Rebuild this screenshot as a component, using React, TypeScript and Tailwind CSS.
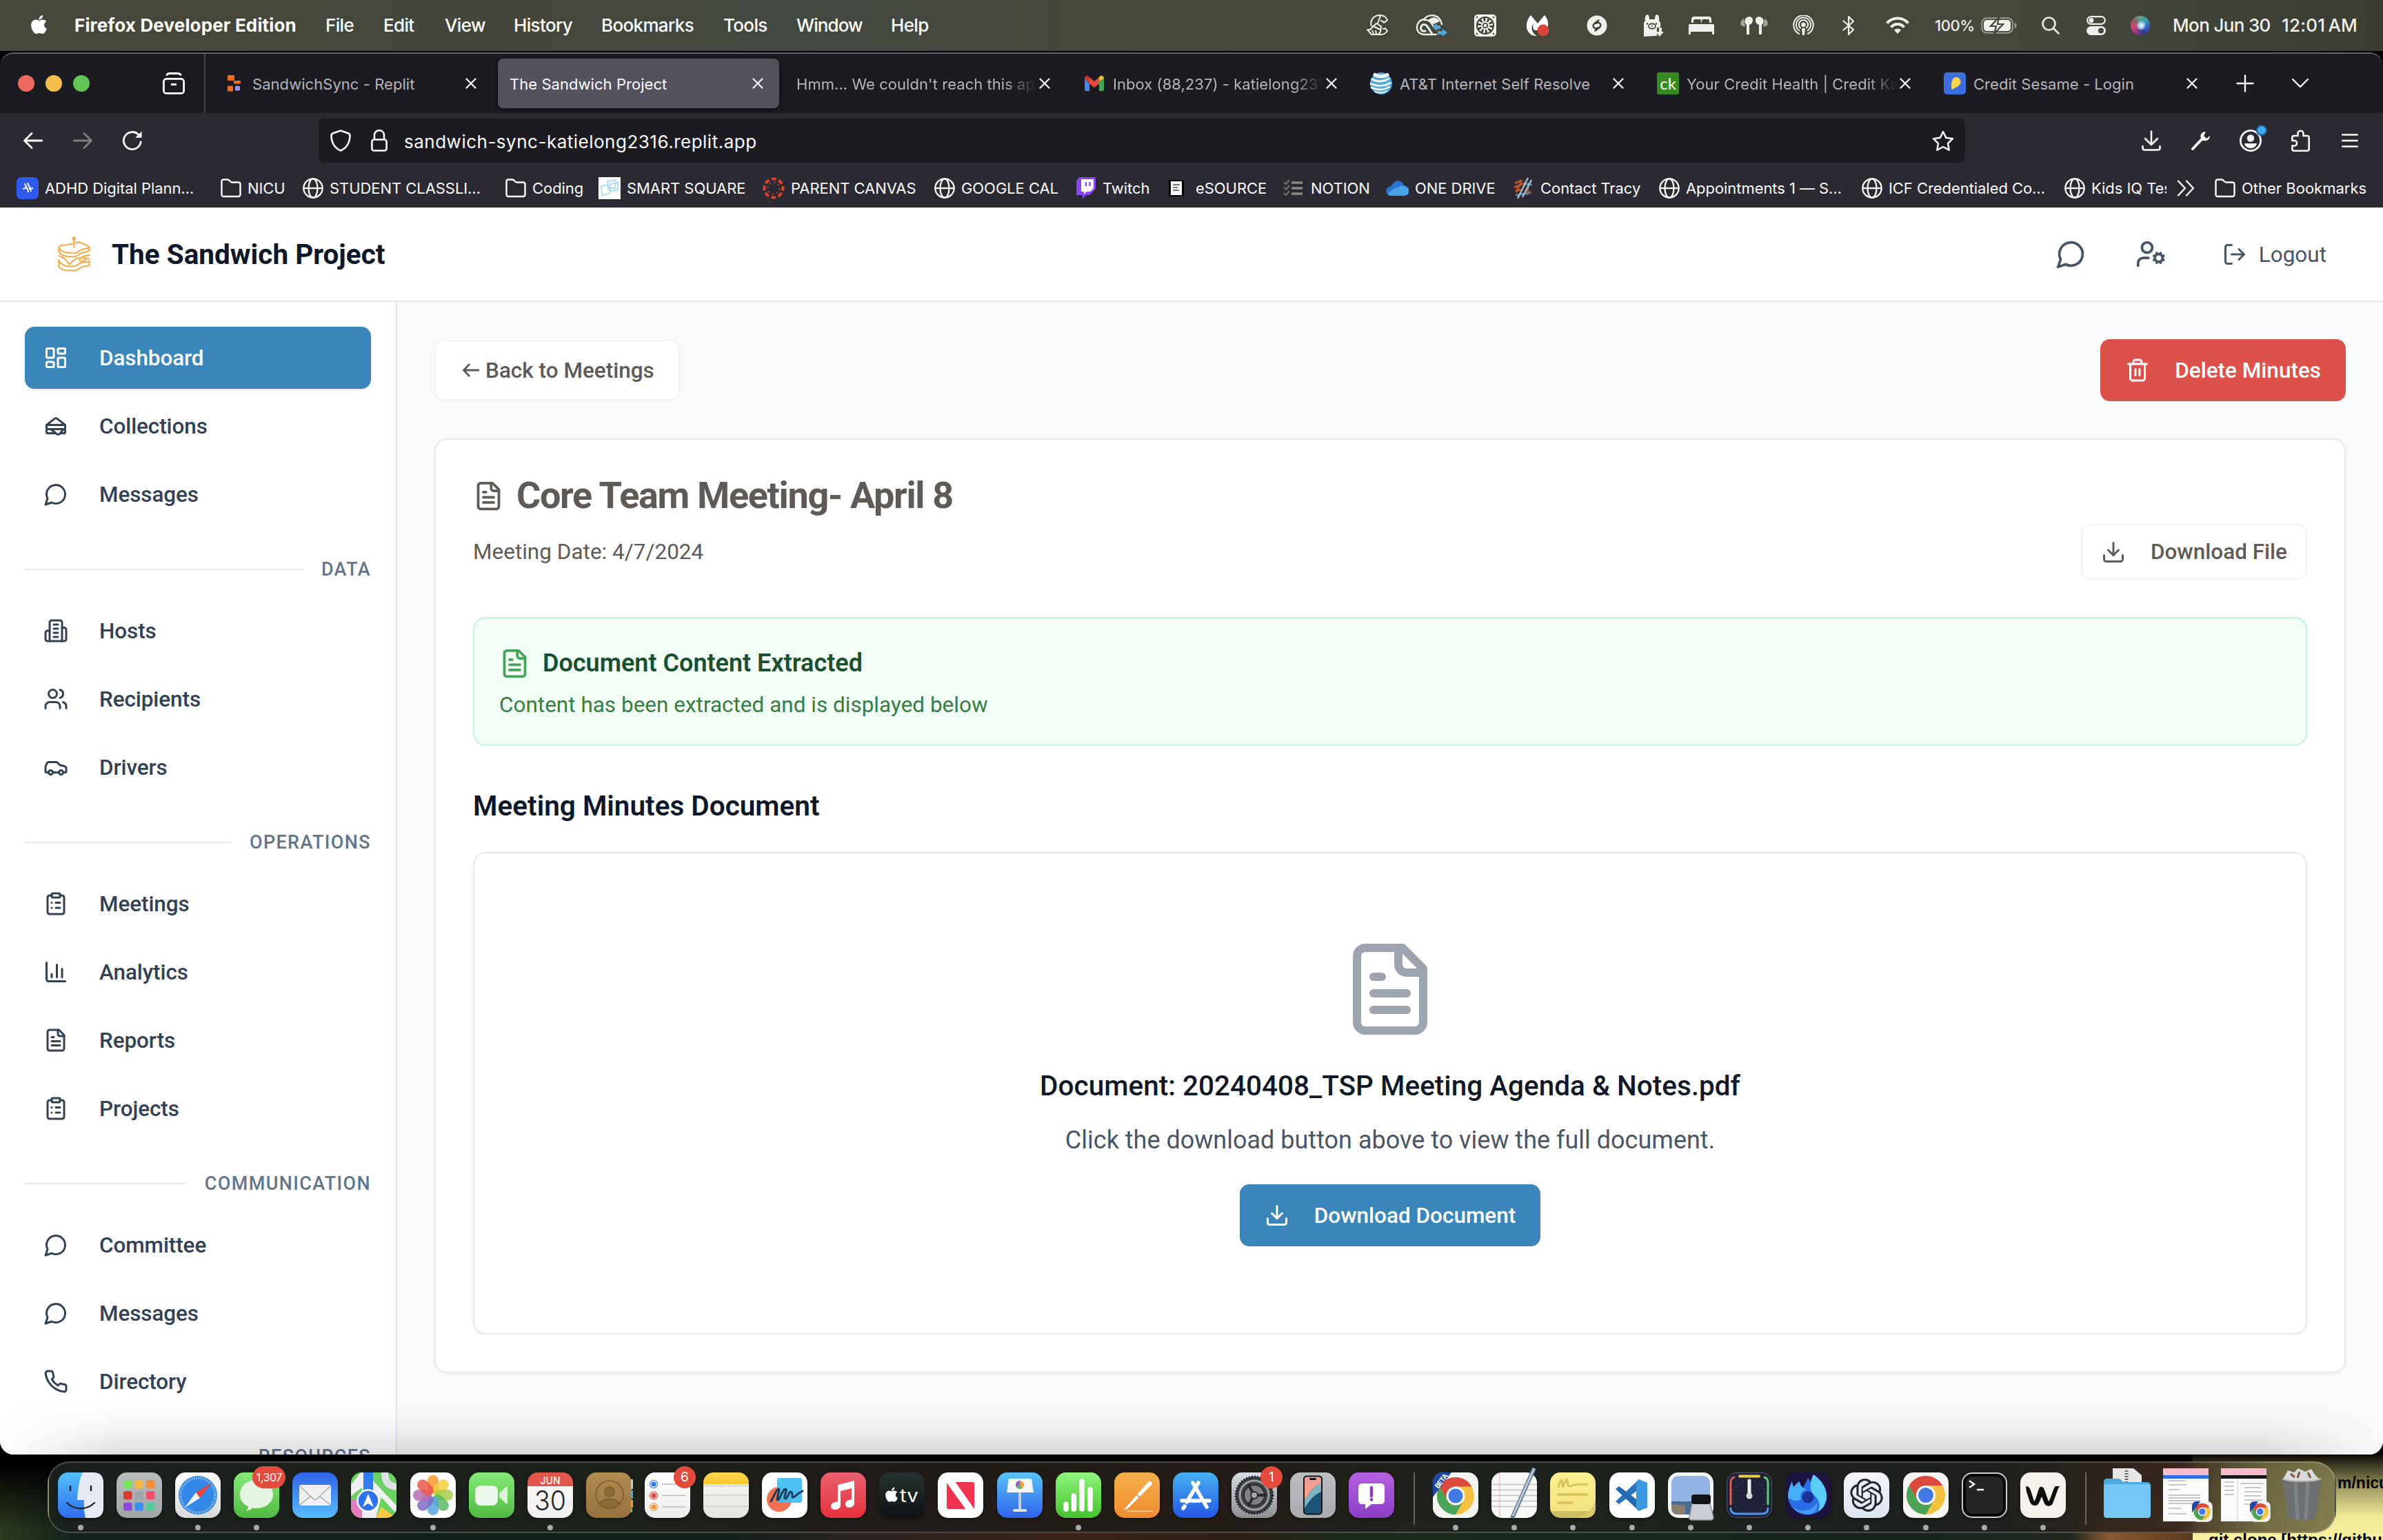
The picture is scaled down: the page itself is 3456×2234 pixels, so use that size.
import React, { type ReactNode } from 'react';
import { FaApple } from 'react-icons/fa';
import { SiOpenai } from 'react-icons/si';
import { Car, ChartColumn, ClipboardList, Download, LayoutDashboard, LogOut, UserCog, Users } from 'lucide-react';

type IconProps = { className?: string };

/* ---------- Outline icons of the web app ---------- */

function Outline({ paths, className }: { paths: string[]; className?: string }) {
  return (
    <svg viewBox="0 0 24 24" fill="none" stroke="currentColor" strokeWidth={2} strokeLinecap="round" strokeLinejoin="round" className={className}>
      {paths.map((d) => (
        <path key={d} d={d} />
      ))}
    </svg>
  );
}

const FileText = ({ className }: IconProps) => (
  <Outline className={className} paths={['M15 2H6a2 2 0 0 0-2 2v16a2 2 0 0 0 2 2h12a2 2 0 0 0 2-2V7Z', 'M14 2v4a2 2 0 0 0 2 2h4', 'M10 9H8', 'M16 13H8', 'M16 17H8']} />
);
const Bubble = ({ className }: IconProps) => <Outline className={className} paths={['M7.9 20A9 9 0 1 0 4 16.1L2 22Z']} />;
const Trash = ({ className }: IconProps) => (
  <Outline className={className} paths={['M3 6h18', 'M19 6v14c0 1-1 2-2 2H7c-1 0-2-1-2-2V6', 'M8 6V4c0-1 1-2 2-2h4c1 0 2 1 2 2v2', 'M10 11v6', 'M14 11v6']} />
);
const Building = ({ className }: IconProps) => (
  <Outline
    className={className}
    paths={['M6 22V4a2 2 0 0 1 2-2h8a2 2 0 0 1 2 2v18Z', 'M6 12H4a2 2 0 0 0-2 2v6a2 2 0 0 0 2 2h2', 'M18 9h2a2 2 0 0 1 2 2v9a2 2 0 0 1-2 2h-2', 'M10 6h4', 'M10 10h4', 'M10 14h4', 'M10 18h4']}
  />
);
const SandwichIcon = ({ className }: IconProps) => (
  <Outline
    className={className}
    paths={[
      'M3 11v3a1 1 0 0 0 1 1h16a1 1 0 0 0 1-1v-3',
      'M12 19H4a1 1 0 0 1-1-1v-2a1 1 0 0 1 1-1h16a1 1 0 0 1 1 1v2a1 1 0 0 1-1 1h-3.83',
      'm3 11 7.77-6.04a2 2 0 0 1 2.46 0L21 11H3Z',
      'M12.97 19.77 7 15h12.5l-3.75 4.5a2 2 0 0 1-2.78.27Z',
    ]}
  />
);
const Phone = ({ className }: IconProps) => (
  <Outline
    className={className}
    paths={[
      'M22 16.92v3a2 2 0 0 1-2.18 2 19.79 19.79 0 0 1-8.63-3.07 19.5 19.5 0 0 1-6-6 19.79 19.79 0 0 1-3.07-8.67A2 2 0 0 1 4.11 2h3a2 2 0 0 1 2 1.72 12.84 12.84 0 0 0 .7 2.81 2 2 0 0 1-.45 2.11L8.09 9.91a16 16 0 0 0 6 6l1.27-1.27a2 2 0 0 1 2.11-.45 12.84 12.84 0 0 0 2.81.7A2 2 0 0 1 22 16.92z',
    ]}
  />
);

/* ---------- macOS menu bar ---------- */

function MenuBar() {
  return (
    <header className="flex h-[74px] shrink-0 items-center justify-between bg-[linear-gradient(90deg,#47473b_0%,#45463b_22%,#424940_34%,#46463a_46%,#47483a_75%,#43463a_88%,#393d32_100%)] text-[26px] leading-[32px] font-medium tracking-[-0.65px] whitespace-nowrap text-white">
      <nav className="grid grid-cols-[67px_364px_84px_89px_100px_127px_177px_106px_137px_80px] items-center pl-[41px]">
        <FaApple className="-mt-1 size-[31px]" />
        <span className="font-bold tracking-[0.15px]">Firefox Developer Edition</span>
        <span>File</span>
        <span>Edit</span>
        <span>View</span>
        <span>History</span>
        <span>Bookmarks</span>
        <span>Tools</span>
        <span className="tracking-[-0.9px]">Window</span>
        <span>Help</span>
      </nav>
      <div className="grid grid-cols-[71px_85px_75px_88px_82px_66px_75px_76px_72px_63px_71px_67px_88px_65px_64px_61px_158px_147px] items-center text-[#efefec]">
        <svg viewBox="0 0 32 32" className="size-8" fill="none" stroke="currentColor" strokeWidth="2" strokeLinejoin="round">
          <path d="M7 17C4 8 11 1 19 1c5 0 9 2 11 7l-5 4c-1-2-3-3-5-3M20 2l-4 11M10 17l4-4 7 4-1 7M9 17c-2 4-5 6-8 5l6 7h9c3-2 5-5 4-7zM23 20c1 1 3 1 4 0l3 4c-3 4-8 6-13 5M8 23l2 5M13 23l1 5" />
        </svg>
        <svg viewBox="0 0 47 32" className="h-8 w-[47px]">
          <g fill="none" stroke="#efefec" strokeWidth="2.4" strokeLinecap="round">
            <path d="M30 29H12C-2 28-1 9 12 7C18-1 35-2 38 14" />
            <path d="M24 28l-8-12c-6-5-12 4-6 8h4" strokeWidth="3" />
            <path d="M13 8c6-1 10 4 12 8" strokeWidth="2.4" />
          </g>
          <path d="M18 9c5-7 14-5 17 1l-9 4z" fill="#efefec" />
          <path d="M24 18l7-5v3h5v5h-5v3zM46 26l-7-5v3h-7v5h7v3z" fill="#4ca6df" />
        </svg>
        <svg viewBox="0 0 32 32" className="size-8">
          <rect width="32" height="32" rx="5" fill="#efefec" />
          <circle cx="16" cy="16" r="12" fill="none" stroke="#3b3c34" strokeWidth="2" />
          <circle cx="16" cy="16" r="8.5" fill="none" stroke="#3b3c34" strokeWidth="5" strokeDasharray="2.6 2.74" />
          <circle cx="16" cy="16" r="3.2" fill="#efefec" stroke="#3b3c34" strokeWidth="1.6" />
          <g fill="#3b3c34">
            <circle cx="4" cy="4" r="1.2" />
            <circle cx="28" cy="4" r="1.2" />
            <circle cx="4" cy="28" r="1.2" />
            <circle cx="28" cy="28" r="1.2" />
          </g>
        </svg>
        <svg viewBox="0 0 34 32" className="h-8 w-[34px]">
          <path d="M7 1L17 13 27 1c8 9 5 19 3 22H14c-3 0-5-5-3-10-5 6-2 15 5 18C2 32-5 15 7 1z" fill="#fff" />
          <circle cx="25" cy="23" r="8.4" fill="#d9453b" />
        </svg>
        <svg viewBox="0 0 30 30" className="size-[30px]">
          <circle cx="15" cy="15" r="14.5" fill="#efefec" />
          <path d="M17.5 7.5l-6 4.500c-2.500 2-2.500 5 0 6.500 1.500 1 3.500 1 5-.5M12.500 22.500l6-4.500c2.500-2 2.500-5 0-6.500-1.500-1-3.500-1-5 .5" fill="none" stroke="#3b3c34" strokeWidth="2.4" strokeLinecap="round" />
        </svg>
        <svg viewBox="0 0 30 34" className="h-[34px] w-[30px]">
          <path d="M1 33V14c0-2 1-3 2-4C2 5 4 1 6 1s3 3 3 7h8c0-4 1-7 3-7s4 4 3 9c2 2 3 5 2 8l-1 2h-4v12z" fill="#efefec" />
          <path d="M23 20v6h-5l6 7 6-7h-3v-6z" fill="#efefec" />
          <ellipse cx="13" cy="18" rx="5" ry="3.6" fill="none" stroke="#3b3c34" strokeWidth="1.6" />
          <circle cx="6" cy="14.5" r="1.2" fill="#3b3c34" />
          <circle cx="19" cy="14.5" r="1.2" fill="#3b3c34" />
          <circle cx="13" cy="17.5" r="1" fill="#3b3c34" />
        </svg>
        <svg viewBox="0 0 37 26" className="h-[26px] w-[37px]" fill="currentColor">
          <path d="M4 9V4c0-2 1-4 4-4h21c3 0 4 2 4 4v5h-3V6c0-1-1-2-2-2h-7c-1 0-2 1-2 2v3h-1V6c0-1-1-2-2-2H9C8 4 7 5 7 6v3zM0 26V13c0-2 1-2 3-2h31c2 0 3 0 3 2v13h-3v-4H3v4z" />
        </svg>
        <svg viewBox="0 0 40 28" className="h-7 w-10" fill="currentColor">
          <path d="M5 4c-4 2-6 6-4 10l6 2z" opacity="0.55" />
          <path d="M35 4c4 2 6 6 4 10l-6 2z" opacity="0.55" />
          <path d="M7 5c2-5 11-5 11 1 0 4-2 6-5 7v14H9V13C6 11 6 8 7 5zM33 5c-2-5-11-5-11 1 0 4 2 6 5 7v14h4V13c3-2 3-5 2-8z" />
        </svg>
        <svg viewBox="0 0 31 30" className="h-[30px] w-[31px]" fill="none" stroke="currentColor" strokeWidth="2" strokeLinecap="round">
          <path d="M9 27A14.2 14.2 0 1 1 22 27" />
          <path d="M9.5 22.5A10.5 10.5 0 1 1 21.500 22.5" />
          <path d="M11 18.5A6.6 6.6 0 1 1 20 18.5" />
          <circle cx="15.5" cy="14" r="2.2" fill="currentColor" />
          <path d="M14.2 20l.7 8h1.2l.7-8z" fill="currentColor" />
        </svg>
        <svg viewBox="0 0 18 30" className="h-[30px] w-[18px]" fill="none" stroke="currentColor" strokeWidth="2.2" strokeLinejoin="round" strokeLinecap="round">
          <path d="M1.5 8.5L16 21 9 28V2l7 7L1.5 21.5" />
        </svg>
        <svg viewBox="0 0 34 26" className="h-[26px] w-[34px]" fill="none" stroke="currentColor" strokeWidth="4">
          <path d="M1.5 9.5C10 0 24 0 32.5 9.5" />
          <path d="M7.5 15.5c5-6 14-6 19 0" />
          <path d="M17 25l-5-5.5c3-2.5 7-2.5 10 0z" fill="currentColor" stroke="none" />
        </svg>
        <span className="text-[22px] tracking-[-0.4px]">100%</span>
        <svg viewBox="0 0 53 26" className="h-[26px] w-[53px]">
          <rect x="1.2" y="2.2" width="44.6" height="21.6" rx="7" fill="none" stroke="#efefec" strokeOpacity="0.5" strokeWidth="2" />
          <path d="M48.5 9v8c2-.6 3-2 3-4s-1-3.400-3-4z" fill="#efefec" fillOpacity="0.5" />
          <rect x="4" y="5" width="39" height="16" rx="4.5" fill="#efefec" />
          <path d="M26 1L14 14h8l-3 11 13-14h-8z" fill="#efefec" stroke="#45463a" strokeWidth="2.2" />
        </svg>
        <svg viewBox="0 0 26 26" className="size-[26px]" fill="none" stroke="currentColor" strokeWidth="2.6" strokeLinecap="round">
          <circle cx="10.5" cy="10.5" r="9" />
          <path d="M17.5 17.5L24.5 24.5" />
        </svg>
        <svg viewBox="0 0 28 28" className="size-7">
          <rect x="1.2" y="1.2" width="25.6" height="10.6" rx="5.3" fill="none" stroke="#efefec" strokeWidth="2.2" />
          <circle cx="7" cy="6.5" r="3.4" fill="#efefec" />
          <rect y="15" width="28" height="13" rx="6.5" fill="#efefec" />
          <circle cx="21" cy="21.5" r="4" fill="#45463a" />
        </svg>
        <span className="size-7 rounded-full bg-[radial-gradient(circle_at_55%_50%,#ffffff_0%,#9fd8f0_18%,transparent_36%),conic-gradient(#5fa58c,#3a9bb0,#3b58c8,#2b3a8a,#8a3b86,#d6447a,#8e5a6a,#5fa58c)]" />
        <span>Mon Jun 30</span>
        <span className="tracking-[0.2px] [word-spacing:-3px]">12:01 AM</span>
      </div>
    </header>
  );
}

/* ---------- Browser chrome ---------- */

const Cross = () => (
  <svg viewBox="0 0 16 16" className="size-4 shrink-0" fill="none" stroke="#fbfbfe" strokeWidth="2.2" strokeLinecap="round">
    <path d="M1.5 1.5l13 13M14.5 1.5l-13 13" />
  </svg>
);

const ReplitIcon = () => (
  <svg viewBox="0 0 32 32" className="size-8">
    <rect x="7" y="4" width="10" height="8" rx="1.5" fill="#ee6c1f" />
    <rect x="16" y="12" width="10" height="4.5" rx="1" fill="#ee6c1f" />
    <rect x="7" y="19.5" width="8" height="8" rx="1.5" fill="#ee6c1f" />
    <rect x="18" y="19.5" width="7" height="7" rx="1.5" fill="#a48bf5" />
  </svg>
);
const GmailIcon = () => (
  <svg viewBox="0 0 32 32" className="size-8">
    <path d="M2 8v17c0 1 1 2 2 2h5V13z" fill="#4a86ee" />
    <path d="M30 8v17c0 1-1 2-2 2h-5V13z" fill="#43a357" />
    <path d="M23 13V7c3-4 7-2 7 2z" fill="#f6bd3a" />
    <path d="M2 9c0-4 4-6 7-2v9.5z" fill="#bd372b" />
    <path d="M9 7l7 6 7-6v9.5L16 22l-7-5.5z" fill="#e64a3b" />
  </svg>
);
const AttIcon = () => (
  <svg viewBox="0 0 32 32" className="size-8">
    <circle cx="16" cy="16" r="16" fill="#4fa9d8" />
    <g fill="none" stroke="#f1f8fc" strokeLinecap="round">
      <path d="M7 3.5c5 3 13 3 18 0" strokeWidth="5" />
      <path d="M3 10c6 4 17 4 24-1" strokeWidth="3" />
      <path d="M1 16.5c8 4 19 4 28-1" strokeWidth="3" />
      <path d="M2 22c8 4 18 4 26-1" strokeWidth="2.6" />
      <path d="M7 28c6 2 12 2 17-1" strokeWidth="2" />
    </g>
  </svg>
);
const CreditKarmaIcon = () => (
  <span className="flex size-8 items-center justify-center rounded-[3px] bg-[#378a20] font-['Lato'] text-[24px] leading-8 font-normal text-white">ck</span>
);
const SesameIcon = () => (
  <svg viewBox="0 0 32 32" className="size-8">
    <rect width="32" height="32" rx="5" fill="#3b6fe0" />
    <path d="M12 25c-2-6-1-18 6-18 6 0 9 8 4 12-3 3-6 3-10 6z" fill="#fbd54b" />
  </svg>
);

type TabInfo = { title: string; icon?: ReactNode; active?: boolean; faded?: boolean };
const tabs: TabInfo[] = [
  { title: 'SandwichSync - Replit', icon: <ReplitIcon /> },
  { title: 'The Sandwich Project', active: true },
  { title: "Hmm... We couldn't reach this app", faded: true },
  { title: 'Inbox (88,237) - katielong2316', icon: <GmailIcon />, faded: true },
  { title: 'AT&T Internet Self Resolve', icon: <AttIcon /> },
  { title: 'Your Credit Health | Credit Karma', icon: <CreditKarmaIcon />, faded: true },
  { title: 'Credit Sesame - Login', icon: <SesameIcon /> },
];

function Tab({ title, icon, active, faded }: TabInfo) {
  return (
    <div className={`flex h-[72px] w-[408px] shrink-0 items-center rounded-lg pr-[23px] pl-[17px] ${active ? 'bg-[#54525d] text-[#fbfbfe] shadow-[0_1px_6px_rgba(0,0,0,0.6)]' : 'text-[#b5b5ba]'}`}>
      {icon && <span className="mr-[11px] shrink-0">{icon}</span>}
      <span
        className={`mt-px min-w-0 flex-1 overflow-hidden text-[22px] leading-[32px] tracking-[0.05px] whitespace-nowrap ${faded ? '[mask-image:linear-gradient(90deg,#000_86%,transparent_100%)]' : ''}`}
      >
        {title}
      </span>
      <span className="ml-1">
        <Cross />
      </span>
    </div>
  );
}

function TabBar() {
  return (
    <div className="flex h-[86px] items-center bg-[#1c1b22]">
      <div className="flex w-[199px] items-center gap-4 pl-[26px]">
        <span className="size-6 rounded-full bg-[#ed6a5e]" />
        <span className="size-6 rounded-full bg-[#f5bf4f]" />
        <span className="size-6 rounded-full bg-[#61c554]" />
      </div>
      <svg viewBox="0 0 32 32" className="ml-[37px] h-8 w-8 text-[#fbfbfe]" fill="none" stroke="currentColor" strokeWidth="2.8">
        <rect x="1.4" y="9.4" width="29.2" height="21" rx="4" />
        <path d="M5.5 4.5c1-3 3-3 5-3h11c2 0 4 0 5 3" />
        <path d="M12 17.500h8" strokeWidth="3.2" />
      </svg>
      <span className="ml-[28px] h-full w-[2px] bg-[#46454d]" />
      <div className="ml-2 flex gap-2">
        {tabs.map((t) => (
          <Tab key={t.title} {...t} />
        ))}
      </div>
      <svg viewBox="0 0 26 26" className="ml-[33px] size-[26px]" fill="none" stroke="#fbfbfe" strokeWidth="2.4" strokeLinecap="round">
        <path d="M13 1.5v23M1.5 13h23" />
      </svg>
      <svg viewBox="0 0 26 16" className="ml-[54px] h-4 w-[26px]" fill="none" stroke="#fbfbfe" strokeWidth="2.4" strokeLinecap="round" strokeLinejoin="round">
        <path d="M2 2l11 11L24 2" />
      </svg>
    </div>
  );
}

function NavBar() {
  return (
    <div className="flex h-20 items-center bg-[#2b2a33] text-[#fbfbfe]">
      <svg viewBox="0 0 28 24" className="ml-[34px] h-6 w-7" fill="none" stroke="currentColor" strokeWidth="2.8" strokeLinecap="round" strokeLinejoin="round">
        <path d="M27 12H2M12 1.5L1.5 12 12 22.5" />
      </svg>
      <svg viewBox="0 0 28 24" className="ml-[44px] h-6 w-7 opacity-40" fill="none" stroke="currentColor" strokeWidth="2.8" strokeLinecap="round" strokeLinejoin="round">
        <path d="M1 12h25M16 1.5L26.5 12 16 22.5" />
      </svg>
      <svg viewBox="0 0 30 30" className="ml-[43px] size-[30px]" fill="none" stroke="currentColor" strokeWidth="2.8" strokeLinecap="round">
        <path d="M27.2 17A12.5 12.5 0 1 1 24 6.5" />
        <path d="M28.5 1.5v9.3h-9.3z" fill="currentColor" stroke="none" />
      </svg>
      <div className="ml-[255px] flex h-16 w-[2388px] items-center rounded-lg bg-[#1c1b22] pr-4 pl-[17px]">
        <svg viewBox="0 0 30 32" className="h-8 w-[30px]" fill="none" stroke="currentColor" strokeWidth="2.6" strokeLinejoin="round">
          <path d="M15 1.5l11.5 4c2 .8 2 2 2 4C28 20 23 27 15 30.5 7 27 2 20 1.5 9.5c0-2 0-3.200 2-4z" />
        </svg>
        <svg viewBox="0 0 24 32" className="ml-[29px] h-8 w-6" fill="none" stroke="currentColor" strokeWidth="2.6">
          <rect x="1.4" y="14.5" width="21.2" height="16" rx="3" />
          <path d="M5 14V8c0-9 14-9 14 0v6" />
        </svg>
        <span className="mt-[3px] ml-[24px] flex-1 text-[26px] leading-[34px] tracking-[0.5px]">sandwich-sync-katielong2316.replit.app</span>
        <svg viewBox="0 0 32 31" className="h-[31px] w-8" fill="none" stroke="currentColor" strokeWidth="2.5" strokeLinejoin="round">
          <path d="M16 2l4.2 8.8 9.8 1.4-7 6.8 1.7 9.7L16 24l-8.700 4.7L9 19l-7-6.8 9.8-1.4z" />
        </svg>
      </div>
      <svg viewBox="0 0 28 30" className="ml-[256px] h-[30px] w-7" fill="none" stroke="currentColor" strokeWidth="2.6" strokeLinecap="round" strokeLinejoin="round">
        <path d="M14 1.5v19M5 12l9 9 9-9M1.5 23v2.5c0 2 1 3 3 3h19c2 0 3-1 3-3V23" />
      </svg>
      <svg viewBox="0 0 28 28" className="ml-[44px] size-7" fill="none" stroke="currentColor" strokeLinecap="round">
        <path d="M2 26L17 10" strokeWidth="4" />
        <path d="M21 1c-6 0-9 5-7 9 0 3 1 4 4 4 5 1 9-2 9-7l-5 4-4-4z" fill="currentColor" stroke="none" />
      </svg>
      <span className="relative ml-[42px] size-8">
        <svg viewBox="0 0 32 32" className="size-8" fill="none" stroke="currentColor">
          <circle cx="16" cy="16" r="14.6" strokeWidth="2.8" />
          <circle cx="16" cy="12.5" r="5.2" fill="currentColor" stroke="none" />
          <path d="M7 20h18c-1 5-5 7-9 7s-8-2-9-7z" fill="currentColor" stroke="none" />
        </svg>
        <span className="absolute -top-[5px] left-[26px] size-[12px] rounded-full bg-[#3fa9f5] ring-2 ring-[#205b84]" />
      </span>
      <svg viewBox="0 0 27 32" className="ml-[43px] h-8 w-[27px]" fill="none" stroke="currentColor" strokeWidth="2.6" strokeLinejoin="round">
        <path d="M9.5 9V5.5c0-5 8-5 8 0V9H23c2 0 2.7 1 2.7 2.7V28c0 2-.7 2.7-2.7 2.7H4c-2 0-2.700-.7-2.700-2.7v-4.5H5c4 0 4-7.500 0-7.500H1.3v-4.300C1.3 10 2 9 4 9z" />
      </svg>
      <svg viewBox="0 0 24 20" className="ml-[46px] h-5 w-6" stroke="currentColor" strokeWidth="2.6" strokeLinecap="round">
        <path d="M1.3 1.5h21.4M1.3 10h21.4M1.3 18.5h21.4" />
      </svg>
    </div>
  );
}

const Folder = () => (
  <svg viewBox="0 0 30 28" className="h-7 w-[30px]" fill="none" stroke="#fbfbfe" strokeWidth="2.4" strokeLinejoin="round">
    <path d="M1.5 23V4.5c0-2 1-3 3-3h5.5c3 0 3.5 4 6.5 4h9c2 0 3 1 3 3V23c0 2-1 3-3 3h-21c-2 0-3-1-3-3z" />
  </svg>
);
const Globe = () => (
  <svg viewBox="0 0 30 30" className="size-[30px]" fill="none" stroke="#fbfbfe" strokeWidth="2.3">
    <circle cx="15" cy="15" r="13.7" />
    <ellipse cx="15" cy="15" rx="6.5" ry="13.7" />
    <path d="M1.5 15h27" />
  </svg>
);
const PlannerIcon = () => (
  <svg viewBox="0 0 32 32" className="size-8">
    <rect width="32" height="32" rx="7" fill="#2f5cf0" />
    <path d="M12 9c0 4 5 7 5 13M16 8c0 5 5 5 5 13M9 17c3 0 3-2 5-1M18 17l6-1" stroke="#fff" strokeWidth="2" fill="none" />
  </svg>
);
const SmartSquareIcon = () => (
  <svg viewBox="0 0 32 32" className="size-8">
    <rect width="32" height="32" fill="#fff" />
    <path d="M4 13l10-2 3 12-12 4zM13 6l12-2-1 12H14zM17 10l11-2v11l-11 1z" fill="none" stroke="#a9daf3" strokeWidth="1.8" />
  </svg>
);
const CanvasIcon = () => (
  <svg viewBox="0 0 32 32" className="size-8" fill="none" stroke="#d8452f">
    <circle cx="16" cy="16" r="13.5" strokeWidth="4" strokeDasharray="7 3.6" strokeDashoffset="3.5" />
    <circle cx="16" cy="16" r="8.5" strokeWidth="2" strokeDasharray="2 4.67" />
  </svg>
);
const TwitchIcon = () => (
  <svg viewBox="0 0 28 32" className="h-8 w-7">
    <path d="M4 0h24v17l-9 9h-5l-5 6v-6H0V6z" fill="#8a45f2" />
    <path d="M7 3h18v13l-5 5h-5l-4 4v-4H7z" fill="#fff" />
    <path d="M14 7v6M19.5 7v6" stroke="#8a45f2" strokeWidth="2.4" />
  </svg>
);
const SourceIcon = () => (
  <svg viewBox="0 0 22 24" className="h-6 w-[22px]">
    <rect width="22" height="24" fill="#000" />
    <rect x="3" y="2" width="16" height="20" fill="#fff" />
    <path d="M6 7h10M6 11h7M6 15h9" stroke="#777" strokeWidth="1.8" />
  </svg>
);
const NotionIcon = () => (
  <svg viewBox="0 0 28 28" className="size-7" fill="none" stroke="#8b8b85">
    <path d="M12 6h16M12 14h16M12 22h16" strokeWidth="3.6" />
    <path d="M1 5l3 3 5-6M1 13l3 3 5-6M1 21l3 3 5-6" strokeWidth="2.4" stroke="#6c6c66" />
  </svg>
);
const CloudIcon = () => (
  <svg viewBox="0 0 33 22" className="h-[22px] w-[33px]">
    <path d="M8 8C12-2 23-2 26 7c6 1 8 5 7 9 0 4-4 6-8 6H7C-2 21-2 9 8 8z" fill="#2a74cf" />
    <path d="M3 19c6-7 12-9 15-9 3-3 8-3 10-1 5 1 6 5 5 8 0 3-4 5-8 5H7c-2 0-3-1-4-3z" fill="#4aa3e8" />
  </svg>
);
const ScribbleIcon = () => (
  <svg viewBox="0 0 32 32" className="size-8" fill="none" strokeWidth="3">
    <path d="M4 9l9-4M3 15l17-7M14 4l-8 18M5 20l8-2" stroke="#b5562c" />
    <path d="M19 18l9 5M24 8l-2 18" stroke="#8e5b33" />
    <path d="M17 10l12 1M5 26l20-3" stroke="#4f86a6" />
    <path d="M23 1L8 31M28 4L15 29" stroke="#aebccb" strokeWidth="2.4" />
  </svg>
);

type Bookmark = { label: string; icon: ReactNode };
const bookmarks: Bookmark[] = [
  { label: 'ADHD Digital Plann…', icon: <PlannerIcon /> },
  { label: 'NICU', icon: <Folder /> },
  { label: 'STUDENT CLASSLI…', icon: <Globe /> },
  { label: 'Coding', icon: <Folder /> },
  { label: 'SMART SQUARE', icon: <SmartSquareIcon /> },
  { label: 'PARENT CANVAS', icon: <CanvasIcon /> },
  { label: 'GOOGLE CAL', icon: <Globe /> },
  { label: 'Twitch', icon: <span className="mr-px block"><TwitchIcon /></span> },
  { label: 'eSOURCE', icon: <span className="mr-2 block"><SourceIcon /></span> },
  { label: 'NOTION', icon: <span className="mr-[3px] block"><NotionIcon /></span> },
  { label: 'ONE DRIVE', icon: <CloudIcon /> },
  { label: 'Contact Tracy', icon: <ScribbleIcon /> },
  { label: 'Appointments 1 — S…', icon: <Globe /> },
  { label: 'ICF Credentialed Co…', icon: <Globe /> },
  { label: 'Kids IQ Test', icon: <Globe /> },
];

function BookmarksBar() {
  return (
    <div className="grid h-[57px] grid-cols-[296px_119px_294px_135px_238px_249px_206px_134px_166px_149px_183px_213px_294px_294px_148px_15px_55px_1fr] items-center bg-[#2b2a33] pl-6 text-[22px] leading-[32px] whitespace-nowrap text-[#fbfbfe]">
      {bookmarks.map((b) => (
        <span key={b.label} className="flex items-center gap-[9px] overflow-hidden">
          <span className="shrink-0">{b.icon}</span>
          <span className="mt-px tracking-[-0.06px]">{b.label}</span>
        </span>
      ))}
      <span />
      <svg viewBox="0 0 26 24" className="h-6 w-[26px]" fill="none" stroke="#fbfbfe" strokeWidth="2.4" strokeLinecap="round" strokeLinejoin="round">
        <path d="M2 1.5L12 12 2 22.5M14 1.5L24 12 14 22.5" />
      </svg>
      <span className="flex items-center gap-[9px]">
        <Folder />
        <span className="mt-px">Other Bookmarks</span>
      </span>
    </div>
  );
}

/* ---------- Web application ---------- */

function SandwichLogo() {
  return (
    <svg viewBox="0 0 141 156" className="h-[52px] w-[47px]" fill="none" stroke="#f0b04f" strokeWidth="6.5" strokeLinejoin="round" strokeLinecap="round">
      <circle cx="70" cy="10" r="5" fill="#f0b04f" />
      <path d="M70 12v36" />
      <path d="M62 32C42 36 34 40 20 38C6 40 2 46 8 54C16 68 36 72 60 72C76 74 88 72 94 62C102 54 120 56 137 48C134 40 114 34 102 28C96 24 88 24 78 28" />
      <path d="M4 48v14C10 82 30 88 56 88C78 90 90 84 98 74C108 68 124 68 137 62V48" />
      <path d="M4 84C26 90 34 100 50 122C66 102 84 92 104 92C118 90 124 98 137 98" />
      <path d="M137 82C120 82 112 84 104 92M96 94v14M104 108C112 104 118 102 124 100" />
      <path d="M4 102C10 122 30 130 56 130C74 130 84 128 92 118C104 110 122 114 137 108V126C122 130 104 130 94 138C86 148 72 150 56 148C30 148 10 144 4 130Z" />
    </svg>
  );
}

function AppHeader() {
  return (
    <div className="flex h-[137px] shrink-0 items-center border-b-2 border-[#e2e8f0] bg-white pr-[82px] pl-[84px] text-[#475569]">
      <SandwichLogo />
      <h1 className="mt-px ml-[31px] flex-1 text-[40.5px] leading-[50px] font-bold text-[#0f172a]">The Sandwich Project</h1>
      <Bubble className="size-[45px]" />
      <UserCog className="ml-[71px] size-[45px]" strokeWidth={2} />
      <LogOut className="ml-[81px] size-9" strokeWidth={2} />
      <span className="mt-px ml-[17px] text-[31.5px] leading-[45px]">Logout</span>
    </div>
  );
}

type NavEntry = { label: string; Icon: React.ComponentType<{ className?: string }>; active?: boolean };
const sections: { title?: string; items: NavEntry[] }[] = [
  {
    items: [
      { label: 'Dashboard', Icon: LayoutDashboard, active: true },
      { label: 'Collections', Icon: SandwichIcon },
      { label: 'Messages', Icon: Bubble },
    ],
  },
  {
    title: 'DATA',
    items: [
      { label: 'Hosts', Icon: Building },
      { label: 'Recipients', Icon: Users },
      { label: 'Drivers', Icon: Car },
    ],
  },
  {
    title: 'OPERATIONS',
    items: [
      { label: 'Meetings', Icon: ClipboardList },
      { label: 'Analytics', Icon: ChartColumn },
      { label: 'Reports', Icon: FileText },
      { label: 'Projects', Icon: ClipboardList },
    ],
  },
  {
    title: 'COMMUNICATION',
    items: [
      { label: 'Committee', Icon: Bubble },
      { label: 'Messages', Icon: Bubble },
      { label: 'Directory', Icon: Phone },
    ],
  },
  { title: 'RESOURCES', items: [] },
];

function Sidebar() {
  return (
    <aside className="flex w-[576px] shrink-0 flex-col gap-[9px] overflow-hidden border-r-2 border-[#e2e8f0] bg-white px-9 pt-9">
      {sections.map((section, i) => (
        <React.Fragment key={i}>
          {section.title && (
            <div className="flex h-[90px] shrink-0 items-center gap-[27px] pt-[19px]">
              <span className="h-[2px] flex-1 bg-[#e2e8f0]" />
              <span className="text-[27px] leading-9 font-medium tracking-[1.35px] text-[#64748b]">{section.title}</span>
            </div>
          )}
          {section.items.map(({ label, Icon, active }, j) => (
            <div
              key={j}
              className={`flex h-[90px] shrink-0 items-center gap-[45px] rounded-[14px] px-[27px] text-[31.5px] leading-[45px] font-medium ${active ? 'bg-[#3a86ba] text-white shadow-sm' : 'text-[#334155]'}`}
            >
              <Icon className="size-9" />
              <span className="mt-px tracking-[-0.1px]">{label}</span>
            </div>
          ))}
        </React.Fragment>
      ))}
    </aside>
  );
}

function MinutesPage() {
  return (
    <main className="flex-1 bg-[#f8fafc] px-[54px] pt-[54px]">
      <div className="flex items-center justify-between text-[31.5px] leading-[45px] font-medium">
        <button className="flex h-[88px] w-[356px] items-center rounded-[14px] border-2 border-[#f1f2f4] bg-white pl-[38px] text-[#605a57]">
          <svg viewBox="0 0 26 20" className="mr-[8px] h-5 w-[26px]" fill="none" stroke="currentColor" strokeWidth="2.8">
            <path d="M25 10H3M11 1L2.5 10 11 19" />
          </svg>
          Back to Meetings
        </button>
        <button className="flex h-[90px] items-center gap-9 rounded-[14px] bg-[#dc5149] px-9 text-white">
          <Trash className="size-9" />
          Delete Minutes
        </button>
      </div>

      <section className="mt-[54px] h-[1356px] rounded-[18px] border-2 border-[#e7e8ea] bg-white px-[54px] pt-[54px] shadow-[0_2px_4px_rgba(0,0,0,0.05)]">
        <h2 className="flex h-[54px] items-center gap-[18px] text-[54px] leading-none font-bold tracking-[-1.35px] text-[#605a57]">
          <FileText className="size-[45px]" />
          Core Team Meeting- April 8
        </h2>
        <div className="mt-[14px] flex h-[81px] items-center justify-between text-[31.5px] leading-[45px] text-[#605a57]">
          <span>Meeting Date: 4/7/2024</span>
          <button className="flex h-[81px] items-center gap-9 rounded-[14px] border-2 border-[#f3f3f4] px-[27px] font-medium">
            <Download className="size-9" strokeWidth={2} />
            Download File
          </button>
        </div>

        <div className="mt-[54px] flex h-[187px] flex-col rounded-[18px] border-2 border-[#c2f5d2] bg-[#f2fdf5] px-9 pt-[38px]">
          <div className="flex h-[54px] items-center gap-[18px] text-[36px] leading-[54px] font-semibold text-[#1a4f2f]">
            <FileText className="size-[45px] text-[#45a457]" />
            Document Content Extracted
          </div>
          <p className="mt-[11px] text-[31.5px] leading-[45px] text-[#377d45]">Content has been extracted and is displayed below</p>
        </div>

        <h3 className="mt-[56px] text-[40.5px] leading-[63px] font-semibold text-[#0f172a]">Meeting Minutes Document</h3>

        <div className="mt-[35px] flex h-[700px] flex-col items-center rounded-[18px] border-2 border-[#e7e8ea] bg-white pt-[125px] shadow-[0_2px_4px_rgba(0,0,0,0.04)]">
          <FileText className="size-36 text-[#9ea3b0]" />
          <h4 className="mt-[37px] text-[40.5px] leading-[63px] font-medium text-[#111827]">Document: 20240408_TSP Meeting Agenda &amp; Notes.pdf</h4>
          <p className="mt-[20px] text-[36px] leading-[54px] text-[#4b5563]">Click the download button above to view the full document.</p>
          <button className="mt-[37px] flex h-[90px] items-center gap-9 rounded-[14px] bg-[#3a86ba] px-9 text-[31.5px] leading-[45px] font-medium text-white">
            <Download className="size-9" strokeWidth={2} />
            Download Document
          </button>
        </div>
      </section>
    </main>
  );
}

function BrowserWindow() {
  return (
    <div className="relative mt-[2px] flex h-[2034px] shrink-0 flex-col overflow-hidden rounded-[20px] border-t-2 border-[#66656d] bg-[#1c1b22]">
      <TabBar />
      <NavBar />
      <BookmarksBar />
      <div className="flex min-h-0 flex-1 flex-col bg-white font-['Roboto',sans-serif]">
        <AppHeader />
        <div className="flex min-h-0 flex-1">
          <Sidebar />
          <MinutesPage />
        </div>
      </div>
      <div className="pointer-events-none absolute inset-x-0 bottom-0 h-[80px] bg-[linear-gradient(0deg,rgba(0,0,0,0.13),rgba(0,0,0,0.04)_50%,transparent)] [mask-image:linear-gradient(90deg,transparent,#000_5%,#000_95%,transparent)]" />
    </div>
  );
}

/* ---------- Dock ---------- */

const squircle = 'absolute inset-0 rounded-[15px]';

function ChromeMark({ r = 27 }: { r?: number }) {
  return (
    <g transform={`translate(33 33) scale(${r / 27})`}>
      <circle r="27" fill="#f4c142" />
      <path d="M0-27A27 27 0 0 1 23.4-13.5H0L-11.7 6.7-23.4-13.5A27 27 0 0 1 0-27z" fill="#db4a3c" />
      <path d="M-23.4-13.5A27 27 0 0 0 0 27L11.7 6.7A13.5 13.5 0 0 1-11.7 6.7z" fill="#4ba357" />
      <circle r="13.5" fill="#fff" />
      <circle r="10.5" fill="#4079e4" />
    </g>
  );
}

type DockEntry = { name: string; tile: string; art?: ReactNode; badge?: string; wide?: boolean; running?: boolean };

const dockApps: DockEntry[] = [
  {
    name: 'Finder', running: true, tile: 'bg-[linear-gradient(180deg,#54c0f8,#2f6df0)]',
    art: (
      <>
        <path d="M36 0H51Q66 0 66 15V51Q66 66 51 66H40Q37 52 38 40H28Q29 14 36 0z" fill="#e6ebf3" />
        <path d="M18 20v6M48 20v6" stroke="#1a2433" strokeWidth="2.6" strokeLinecap="round" />
        <path d="M13 44c11 11 29 11 40 0" fill="none" stroke="#1a2433" strokeWidth="2.4" strokeLinecap="round" />
      </>
    ),
  },
  {
    name: 'Launchpad', tile: 'bg-[linear-gradient(180deg,#b9bcbf,#a3a6a9)]',
    art: (
      <>
        {['#7be35a', '#f6b93f', '#f08e33', '#d9392b', '#9ba3a8', '#ef4f6b', '#8b49d6', '#3a8df5', '#55c8a0'].map((c, i) => (
          <rect key={c} x={10 + (i % 3) * 16.5} y={11 + Math.floor(i / 3) * 16.2} width="12.5" height="12" rx="3" fill={c} />
        ))}
      </>
    ),
  },
  {
    name: 'Safari', running: true, tile: 'bg-[linear-gradient(180deg,#ffffff,#d8d8da)]',
    art: (
      <>
        <circle cx="33" cy="33" r="28" fill="#3488e8" />
        <circle cx="33" cy="33" r="25" fill="none" stroke="#cfe5fb" strokeWidth="3" strokeDasharray="1 2.27" />
        <path d="M53 15L30 29l6 8z" fill="#ea4536" />
        <path d="M14 51l16-22 6 8z" fill="#f3f5f8" />
      </>
    ),
  },
  {
    name: 'Messages', running: true, badge: '1,307', wide: true, tile: 'bg-[linear-gradient(180deg,#86ea78,#50bb43)]',
    art: <path d="M33 11c14 0 24 9 24 20.500S47 52 33 52c-2 0-4 0-6-.6-2 2-5 4-9 4 2-2 3-4 3-6C13 46 9 39 9 31.500 9 20 19 11 33 11z" fill="#e7f5e5" />,
  },
  {
    name: 'Mail', tile: 'bg-[linear-gradient(180deg,#2f63ea,#57bcf8)]',
    art: (
      <>
        <rect x="10" y="18" width="46" height="30" rx="3" fill="#f0f0f2" />
        <path d="M11 20l19 18c2 2 4 2 6 0l19-18M11 47l16-13M55 47L39 34" fill="none" stroke="#a9aaae" strokeWidth="1.6" />
      </>
    ),
  },
  {
    name: 'Maps', tile: 'bg-[#6cd163]',
    art: (
      <>
        <clipPath id="maps-tile">
          <rect width="66" height="66" rx="15" />
        </clipPath>
        <g clipPath="url(#maps-tile)">
          <path d="M0 40h20l20 26H0z" fill="#e37cc0" />
          <path d="M0 18L14 0h18v12l34 36v12L44 36l-8 30H16V22L0 34z" fill="#eef0f2" />
          <path d="M36 66l8-16 22 16z" fill="#f7c945" />
          <path d="M44 0c0 18 8 24 22 26V16c-8-1-12-6-12-16z" fill="#dfe2e4" />
          <path d="M18 0h14v40H18z" fill="#2f7cf0" />
        </g>
        <circle cx="25" cy="41" r="15.5" fill="#2f72ee" stroke="#fff" strokeWidth="2.5" />
        <path d="M25 31l8 19-8-5-8 5z" fill="#fff" />
      </>
    ),
  },
  {
    name: 'Photos', running: true, tile: 'bg-[#fdfdfd]',
    art: (
      <>
        {['#f59a2f', '#f0cf3a', '#a6cf4a', '#5fb86a', '#5aa6dd', '#7d70c2', '#b76fb5', '#ea5a4c'].map((c, i) => (
          <rect key={c} x="25" y="4" width="16" height="27" rx="8" fill={c} fillOpacity="0.86" transform={`rotate(${i * 45} 33 33)`} />
        ))}
      </>
    ),
  },
  {
    name: 'FaceTime', tile: 'bg-[linear-gradient(180deg,#86ea78,#50bb43)]',
    art: (
      <>
        <rect x="9" y="19" width="33" height="29" rx="8" fill="#eef7ed" />
        <path d="M44 30l10-9c1-1 2 0 2 1v22c0 1-1 2-2 1l-10-9z" fill="#dff0dc" />
      </>
    ),
  },
  {
    name: 'Calendar', running: true, tile: 'bg-[linear-gradient(180deg,#e3574b_0%,#e3574b_31%,#f8f7f6_31%,#f1f0ee_100%)]',
    art: (
      <g textAnchor="middle" fontFamily="Inter, sans-serif">
        <text x="33" y="16.5" fontSize="14" fontWeight="500" fill="#fff">JUN</text>
        <text x="33" y="55" fontSize="39" fontWeight="300" fill="#26262a" textLength="46" lengthAdjust="spacingAndGlyphs">30</text>
      </g>
    ),
  },
  {
    name: 'Contacts', tile: 'bg-[linear-gradient(180deg,#b28c50,#98723f)]',
    art: (
      <>
        <path d="M65 10h3v14h-3z" fill="#c7c7c7" />
        <path d="M65 26h3v12h-3z" fill="#4fa8e0" />
        <path d="M65 40h3v11h-3z" fill="#f09b37" />
        <path d="M65 52h2v6h-2z" fill="#66c85b" />
        <g fill="#8b6a3a" stroke="#7a5a2e" strokeWidth="1.6">
          <circle cx="34" cy="32" r="20" fill="none" />
          <circle cx="34" cy="28" r="7" />
          <path d="M19 46c4-10 26-10 30 0-8 8-22 8-30 0z" />
        </g>
      </>
    ),
  },
  {
    name: 'Reminders', badge: '6', tile: 'bg-[linear-gradient(180deg,#ffffff,#ececec)]',
    art: (
      <>
        {['#3478f6', '#e6453a', '#f09a37'].map((c, i) => (
          <g key={c}>
            <circle cx="13" cy={17 + i * 16.5} r="3.6" fill={c} />
            <circle cx="13" cy={17 + i * 16.5} r="5.5" fill="none" stroke={c} strokeWidth="1.2" />
            <path d={`M25 ${17 + i * 16.5}h34`} stroke="#b9b9bb" strokeWidth="1.5" />
          </g>
        ))}
      </>
    ),
  },
  {
    name: 'Notes', tile: 'bg-[linear-gradient(180deg,#fbd84f_0%,#f9c62f_25%,#f5f4f0_26%,#e4e3dd_100%)]',
    art: (
      <>
        <path d="M0 19.5h66" stroke="#b9b6a9" strokeWidth="2" strokeDasharray="1.5 1.5" />
        <path d="M0 33h66M0 49h66" stroke="#cfcec9" strokeWidth="1.5" />
      </>
    ),
  },
  {
    name: 'Freeform', tile: 'bg-white',
    art: (
      <>
        <circle cx="25" cy="39" r="18" fill="#f2724f" />
        <rect x="22" y="8" width="36" height="36" rx="3" fill="#3fbdf2" fillOpacity="0.92" />
        <path d="M13 42c4-6 8-18 11-18s-4 16-1 16 7-16 11-16-4 14 0 14 4-10 8-10 0 10 4 8 4-5 13-9" fill="none" stroke="#143a5c" strokeWidth="3" strokeLinecap="round" />
      </>
    ),
  },
  {
    name: 'Music', tile: 'bg-[linear-gradient(180deg,#ea5f6f,#e5323e)]',
    art: (
      <path d="M25 18l24-6v32c0 9-13 9-13 2 0-5 5-6 9-7V23l-16 4v20c0 9-14 9-14 2 0-5 6-6 10-7z" fill="#fff" />
    ),
  },
  {
    name: 'TV', tile: 'bg-[linear-gradient(180deg,#263330,#0e1214)]',
    art: (
      <>
        <FaApple x={6} y={20} size={24} color="#fff" />
        <text x="30" y="43" fontSize="26" fontFamily="Inter, sans-serif" fill="#fff" textLength="27" lengthAdjust="spacingAndGlyphs">tv</text>
      </>
    ),
  },
  {
    name: 'News', tile: 'bg-white',
    art: (
      <>
        <rect x="13" y="14" width="40" height="39" rx="2" fill="#f0334f" />
        <path d="M13 13h12l28 40v1H41L13 15z" fill="#fff" />
      </>
    ),
  },
  {
    name: 'Keynote', tile: 'bg-[linear-gradient(180deg,#5bc3f7,#2e63ea)]',
    art: (
      <>
        <path d="M17 9h33l3 20H14z" fill="#f5f6f8" />
        <path d="M31 29h4v25h-4z" fill="#c5cfdf" />
        <rect x="23" y="53" width="20" height="4" rx="1.5" fill="#dfe5ee" />
        <circle cx="33" cy="18" r="6" fill="#f0a53b" />
        <path d="M33 18v-6a6 6 0 0 0-5 9z" fill="#8b5ac8" />
        <path d="M33 18l-5 3a6 6 0 0 0 8 2z" fill="#4fb56a" />
      </>
    ),
  },
  {
    name: 'Numbers', running: true, tile: 'bg-[linear-gradient(180deg,#8ff57c,#47c22f)]',
    art: <path d="M15 53V46M26.500 53V34M38 53V13M50 53V25" stroke="#fff" strokeWidth="7.5" strokeLinecap="round" />,
  },
  {
    name: 'Pages', tile: 'bg-[linear-gradient(180deg,#f5b04b,#f08c2f)]',
    art: (
      <>
        <path d="M13 55L49 14c3-3 7 0 5 4L20 52z" fill="#fff" />
        <path d="M32 32l6 5" stroke="#c9a06b" strokeWidth="2" />
        <path d="M18 56h38" stroke="#f7c58b" strokeWidth="2" />
      </>
    ),
  },
  {
    name: 'App Store', tile: 'bg-[linear-gradient(180deg,#46b1f3,#2457e4)]',
    art: <path d="M37 15L20 43M29 15l20 35M13 41h26M46 41h7M17 49l-2 3" stroke="#fff" strokeWidth="5.5" strokeLinecap="round" />,
  },
  {
    name: 'Settings', badge: '1', tile: 'bg-[linear-gradient(180deg,#d6dce3,#8f9092)]',
    art: (
      <>
        <circle cx="33" cy="33" r="27" fill="#3e4043" />
        <circle cx="33" cy="33" r="26.5" fill="none" stroke="#1e1f21" strokeWidth="3.5" strokeDasharray="2 2" />
        <circle cx="33" cy="33" r="21" fill="none" stroke="#9da0a4" strokeWidth="3" />
        <circle cx="33" cy="33" r="15" fill="#7e8185" stroke="#2a2b2d" strokeWidth="2" />
        <path d="M33 33h18M33 33l-9-16M33 33l-9 16" stroke="#2a2b2d" strokeWidth="4" />
        <circle cx="33" cy="33" r="5" fill="#a4a7ab" stroke="#2a2b2d" strokeWidth="2" />
      </>
    ),
  },
  {
    name: 'iPhone Mirroring', tile: 'bg-[linear-gradient(180deg,#bcbec1,#a8aaad)]',
    art: (
      <>
        <rect x="19" y="4.5" width="28" height="57" rx="5" fill="#16181c" />
        <rect x="21" y="6.5" width="24" height="53" rx="3.5" fill="#1b5474" />
        <path d="M21 40V10c0-2 1-3.500 3.500-3.500h17c2 0 3.500 1.500 3.500 3.500v6C34 18 29 30 21 40z" fill="#f3a093" />
        <path d="M45 16v12C34 33 28 40 21 52V40C29 30 34 18 45 16z" fill="#7fb3c4" />
        <rect x="28" y="8" width="10" height="3" rx="1.5" fill="#16181c" />
      </>
    ),
  },
  {
    name: 'Feedback', tile: 'bg-[linear-gradient(180deg,#b560e2,#8a3fc4)]',
    art: (
      <>
        <path d="M20 16h26c4 0 6 2 6 6v18c0 4-2 6-6 6H33l-9 7v-7h-4c-4 0-6-2-6-6V22c0-4 2-6 6-6z" fill="#fff" />
        <path d="M33 22v12M33 39v.5" stroke="#8a3fc4" strokeWidth="4.5" strokeLinecap="round" />
      </>
    ),
  },
];

const openApps: DockEntry[] = [
  {
    name: 'Chrome Beta', running: true, tile: 'bg-[#f3f3f1]',
    art: (
      <>
        <g transform="translate(0 1)"><ChromeMark /></g>
        <path d="M0 36V15Q0 0 15 0H27z" fill="#2346a3" />
        <text transform="translate(8 24) rotate(-53)" fontSize="10" fontWeight="700" fontFamily="Inter, sans-serif" fill="#fff" textLength="24">BETA</text>
      </>
    ),
  },
  {
    name: 'TextEdit', running: true, tile: 'bg-[#f8f8f8]',
    art: (
      <>
        <path d="M0 17.5h66M0 25.5h66M0 33.5h66M0 41.5h66M0 49.5h66" stroke="#bfc0c2" strokeWidth="1.5" />
        <path d="M12 0v66" stroke="#eab0a8" strokeWidth="1.2" />
        <path d="M62-6L30 66" stroke="#64788c" strokeWidth="6" strokeLinecap="butt" />
        <path d="M62-6L31 63" stroke="#b9cbdc" strokeWidth="3" />
      </>
    ),
  },
  {
    name: 'Stickies', running: true, tile: 'bg-[linear-gradient(180deg,#fcf092_0%,#f2e382_84%,#cdbd62_86%)]',
    art: (
      <>
        <path d="M12 22c4-16 6-12 6-4s4-6 6-8 0 12 5 10 6-3 26-3" fill="none" stroke="#d6c45c" strokeWidth="3" />
        <path d="M11 32h44M11 44h22" stroke="#d6c45c" strokeWidth="4" />
        <path d="M66 38v13Q66 66 51 66H40c14-4 22-12 26-28z" fill="#d9ca6d" />
      </>
    ),
  },
  {
    name: 'VS Code', running: true, tile: 'bg-white',
    art: (
      <>
        <path d="M43 10L9 42l5 4 32-24z" fill="#2b74bd" />
        <path d="M9 24l5-4 32 24-3 12z" fill="#2369ad" />
        <path d="M43 10l12 5v36l-12 5-4-3V13z" fill="#3c99e0" />
      </>
    ),
  },
  {
    name: 'Preview', running: true, tile: 'bg-[#f4f4f4]',
    art: (
      <>
        <rect x="5" y="5" width="56" height="56" rx="10" fill="#93b5e6" />
        <path d="M5 42h56v9Q61 61 51 61H15Q5 61 5 51z" fill="#4b6c92" />
        <path d="M5 47c8-2 14 2 20 0v14H15Q5 61 5 51z" fill="#8b7d70" />
        <path d="M35 45h26l5 20c0 3-2 4-4 4H34c-2 0-4-2-3-4z" fill="#c9ced4" stroke="#8d9298" strokeWidth="1.5" />
        <rect x="34" y="32" width="28" height="14" rx="4" fill="#141518" />
      </>
    ),
  },
  {
    name: 'Clock', running: true, tile: 'bg-[#1f2137] ring-1 ring-inset ring-[#555a6e]',
    art: (
      <>
        <circle cx="33" cy="35" r="24" fill="none" stroke="#4a4d68" strokeWidth="3" strokeDasharray="1 5" />
        <g fill="none" strokeWidth="3" strokeLinecap="round">
          <path d="M19 5.5h28" stroke="#e8cf4c" strokeWidth="4" />
          <path d="M11 7c-4 1-5 4-5 8v31" stroke="#e25b4e" />
          <path d="M55 7c4 1 5 4 5 8v31" stroke="#5dd077" />
          <path d="M6 52c0 6 4 8 9 8h36c5 0 9-2 9-8" stroke="#4e95f0" />
        </g>
        <path d="M33 12v20" stroke="#f1f1f3" strokeWidth="5" strokeLinecap="round" />
        <circle cx="33" cy="34" r="4.5" fill="#d8d8dc" />
      </>
    ),
  },
  {
    name: 'Firefox Developer Edition', running: true, tile: 'bg-[#1d1240]',
    art: (
      <>
        <path d="M33 8c4 4 5 8 5 12l3-17c14 10 20 22 19 34-1 15-13 24-27 24S5 50 4 36c0-8 2-16 6-23 0 4 1 6 3 8 2-4 5-6 8-8 0 4 2 7 5 9z" fill="#2a6be6" />
        <path d="M41 3c14 10 20 22 19 34-1 9-6 16-12 20 4-12 0-18-6-24-8-8-6-20-1-30z" fill="#5ccdf8" />
        <path d="M4 36c0-8 2-16 6-23 0 4 1 6 3 8 2-4 5-6 8-8 0 6 5 10 11 12-8 1-11 7-9 14-6 4-14 2-19-3z" fill="#48aef6" />
        <path d="M10 50c10 8 28 8 36-6 2 12-6 17-14 17-9 0-17-4-22-11z" fill="#3f9bf3" />
        <circle cx="33" cy="36" r="8.5" fill="#1c2f92" />
      </>
    ),
  },
  {
    name: 'ChatGPT', running: true, tile: 'bg-[linear-gradient(180deg,#f3f5fa,#dfe4f2)]',
    art: <SiOpenai x={9} y={9} size={48} color="#22262d" />,
  },
  { name: 'Chrome', running: true, tile: 'bg-[#f6f5f3]', art: <ChromeMark r={28} /> },
  {
    name: 'Terminal', running: true, tile: 'bg-[#c9ced3]',
    art: (
      <>
        <rect x="2" y="2" width="62" height="62" rx="13" fill="#050505" />
        <rect x="6" y="6" width="54" height="54" rx="9" fill="#242525" />
        <path d="M11 12l7 5-7 5M22 25h10" fill="none" stroke="#fff" strokeWidth="2.4" />
      </>
    ),
  },
  {
    name: 'Warp', running: true, tile: 'bg-[#f6f2eb]',
    art: <path d="M8 20c5 0 6 3 8 9l4 13c4-4 6-20 9-21 5-1 6 4 8 10l4 11c4-5 6-18 10-22h8c-3 0-4 3-5 6l-7 19c-2 5-10 5-12 0l-4-10c-3 6-4 14-10 13-6 0-7-5-9-11l-3-9z" fill="#0c100e" />,
  },
];

function DockIcon({ tile, art, badge, wide, running }: DockEntry) {
  return (
    <div className="relative size-[66px] shrink-0">
      <span className={`${squircle} shadow-[0_2px_4px_rgba(0,0,0,0.35)] ${tile}`} />
      <svg viewBox="0 0 66 66" className="relative size-[66px] overflow-visible">{art}</svg>
      {running && <span className="absolute -bottom-[18px] left-[29px] size-2 rounded-full bg-[#a7aaa5]" />}
      {badge && (
        <span className={`absolute -top-[9px] flex h-8 items-center justify-center rounded-full bg-[#e34b3d] leading-8 whitespace-nowrap text-white ${wide ? 'left-[27px] w-12 text-[16px] tracking-[-0.4px]' : 'left-[42px] w-8 text-[19px]'}`}>
          {badge}
        </span>
      )}
    </div>
  );
}

function WindowThumb({ dark }: { dark?: boolean }) {
  return (
    <svg viewBox="0 0 66 77" className="h-[77px] w-[66px] overflow-visible">
      <rect width="66" height="77" fill="#fbfbfb" />
      <rect width="66" height="10" fill="#f6bccb" />
      <rect y="10" width="66" height="5" fill={dark ? '#16171c' : '#2c6fe6'} />
      {dark ? (
        <path d="M5 20h14M5 26h14M5 32h14M5 38h14M28 22h34M34 28h24M34 34h26M34 40h24M34 46h26M34 52h12" stroke="#b5b7bd" strokeWidth="1.6" />
      ) : (
        <path d="M8 18h24M8 24h26M8 31h16M8 39h46M8 43h46M8 47h46M8 51h34M8 58h18M8 66h26" stroke="#b5b7bd" strokeWidth="1.6" />
      )}
      {dark && <path d="M24 15v62" stroke="#e0e0e2" strokeWidth="2" />}
      <g transform="translate(42 48) scale(0.45)">
        <rect width="66" height="66" rx="16" fill="#f3f3f1" />
        <ChromeMark />
        <path d="M0 36V15Q0 0 15 0H27z" fill="#2346a3" />
      </g>
    </svg>
  );
}

function Dock() {
  return (
    <div className="relative ml-[69px] flex h-[104px] w-[3319px] items-start rounded-[32px] border-2 border-white/20 bg-[linear-gradient(90deg,rgba(27,34,29,0.96)_0%,rgba(30,34,28,0.96)_25%,rgba(34,28,24,0.96)_38%,rgba(36,29,24,0.96)_52%,rgba(31,36,30,0.96)_62%,rgba(30,33,30,0.96)_85%,rgba(56,40,30,0.95)_93%,rgba(106,102,62,0.95)_97%,rgba(124,120,76,0.95)_100%)] pt-[14px] pl-[13px]">
      <div className="flex gap-[19.1px]">
        {dockApps.map((a) => (
          <DockIcon key={a.name} {...a} />
        ))}
      </div>
      <span className="ml-7 h-[76px] w-[2px] bg-white/30" />
      <div className="ml-[26px] flex gap-[19.2px]">
        {openApps.map((a) => (
          <DockIcon key={a.name} {...a} />
        ))}
      </div>
      <span className="ml-7 h-[76px] w-[2px] bg-white/30" />
      <div className="-mt-[6px] ml-[25px] flex gap-[18px]">
        <svg viewBox="0 0 68 77" className="h-[77px] w-[68px]">
          <path d="M13 0h30l12 10v20H13z" fill="#e6e6e4" />
          <path d="M33 3v24" stroke="#6c6c6c" strokeWidth="5" strokeDasharray="2 2" />
          <path d="M0 20c0-3 2-5 5-5h16c5 0 5 5 9 5h33c3 0 5 2 5 5v42c0 3-2 5-5 5H5c-3 0-5-2-5-5z" fill="#4fa9dc" />
          <path d="M0 26c0-2 2-3 5-3h58c3 0 5 1 5 3v41c0 3-2 5-5 5H5c-3 0-5-2-5-5z" fill="#74c7f5" />
        </svg>
        <WindowThumb />
        <WindowThumb dark />
        <svg viewBox="0 0 66 77" className="h-[77px] w-[66px]">
          <path d="M7 14L13 3l9 3 6-6 10 5 9-4 5 8 6 6-4 8H12z" fill="#d9dadb" />
          <path d="M17 8l6 5M30 5l-3 9M42 6l4 8" stroke="#7c5a44" strokeWidth="3" />
          <path d="M5 15c10 5 46 5 56 0l-8 55c-1 7-39 7-40 0z" fill="#6d7072" />
          <path d="M24 19l3 55M42 19l-3 55" stroke="#94979a" strokeWidth="5" opacity="0.5" />
          <path d="M5 15c10 5 46 5 56 0" fill="none" stroke="#b9bbbd" strokeWidth="2" />
        </svg>
      </div>
    </div>
  );
}

function Desktop() {
  return (
    <div className="relative flex-1 overflow-hidden pt-[10px]">
      <div className="absolute inset-0 bg-[linear-gradient(180deg,#000_10%,rgba(0,0,0,0)_90%),linear-gradient(90deg,#2c3a1e_0%,#16231c_3%,#12201a_30%,#2a2220_36%,#3a2418_45%,#2c1e14_52%,#1b2a1c_56%,#16241c_80%,#22291f_87%,#8a5a30_88.5%,#5c3a20_92%)]" />
      <div className="absolute top-0 left-[3180px] h-[124px] w-[276px] bg-[linear-gradient(180deg,#0a0a06_0%,#3a3821_12%,#a9a46a_42%,#efe896_72%,#f8f1a0_100%)] font-['Liberation_Sans',sans-serif] leading-none font-bold whitespace-nowrap text-black">
        <span className="absolute top-[30px] left-[210px] text-[23px]">m/nicu</span>
        <span className="absolute top-[112px] left-[23px] text-[24px]">git clone [https://github</span>
      </div>
      <Dock />
    </div>
  );
}

export default function App() {
  return (
    <div className="flex h-[2234px] w-[3456px] flex-col overflow-hidden bg-black font-['Inter',sans-serif] leading-none">
      <MenuBar />
      <BrowserWindow />
      <Desktop />
    </div>
  );
}
